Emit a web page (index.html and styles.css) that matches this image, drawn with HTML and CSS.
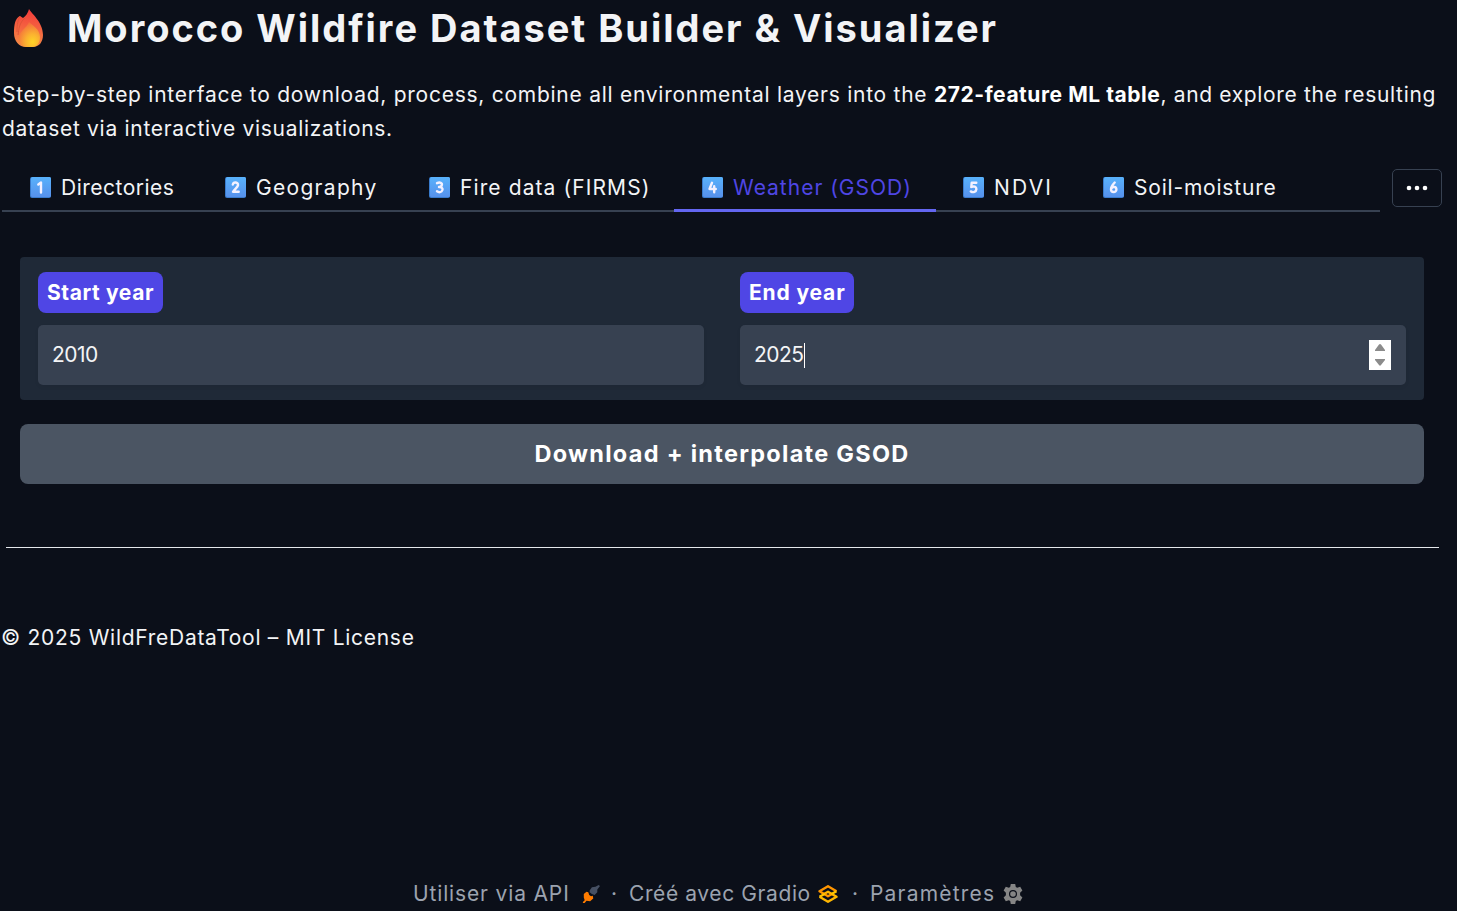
FILE: index.html
```html
<!DOCTYPE html>
<html lang="fr">
<head>
<meta charset="utf-8">
<title>Morocco Wildfire Dataset Builder &amp; Visualizer</title>
<link rel="stylesheet" href="styles.css">
</head>
<body>
<svg class="defs" width="0" height="0" aria-hidden="true">
  <defs>
    <linearGradient id="key" x1="0" y1="0" x2="0" y2="1"><stop offset="0" stop-color="#58b2fc"/><stop offset="1" stop-color="#5791ec"/></linearGradient>
    <linearGradient id="flame" x1=".5" y1="0" x2=".4" y2="1"><stop offset="0" stop-color="#f33b3b"/><stop offset="1" stop-color="#f58b45"/></linearGradient>
    <radialGradient id="core" cx=".65" cy=".8" r=".8"><stop offset="0" stop-color="#ffd426"/><stop offset=".4" stop-color="#fbb230"/><stop offset="1" stop-color="#f36a3d"/></radialGradient>
  </defs>
</svg>
<main class="app">
  <header class="title">
    <svg class="fire" viewBox="0 0 30 38"><path d="M15 0C17 4 29 13 29 26C29 33 25 38 19 38H12C5 38 0 32 0 24C0 16 1 9 6 7L9 9C12 7 14 4 15 0Z" fill="url(#flame)"/><path d="M6 7C3 13 3 18 3 23M11 9C5 14 5 20 4 26" fill="none" stroke="#d95136" stroke-width=".8"/><path d="M15 13C18 16 26 20 26 28C26 34 23 38 18 38H13C8 38 5 34 5 29C5 22 12 20 15 13Z" fill="url(#core)"/></svg>
    <h1>Morocco Wildfire Dataset Builder &amp; Visualizer</h1>
  </header>
  <p class="intro"><span class="line-a">Step-by-step interface to download, process, combine all environmental layers into the </span><strong>272-feature ML table</strong><span class="line-b">, and explore the resulting</span><br><span class="line-c">dataset via interactive visualizations.</span></p>
  <div class="tabs-row">
    <nav class="tabs">
      <button class="tab directories"><svg class="key" viewBox="0 0 21 21"><rect width="21" height="21" rx="2" fill="#397bcc"/><rect x="1" width="20" height="20" rx="1.5" fill="url(#key)"/><path d="M8.3 7.5L11 5.5V15.5"/></svg><span>Directories</span></button>
      <button class="tab geography"><svg class="key" viewBox="0 0 21 21"><rect width="21" height="21" rx="2" fill="#397bcc"/><rect x="1" width="20" height="20" rx="1.5" fill="url(#key)"/><path d="M7.8 7.5C8.5 4.5 13.5 5 13 8.3C12.7 10.5 9.5 12 8 14.8H13.7"/></svg><span>Geography</span></button>
      <button class="tab firms"><svg class="key" viewBox="0 0 21 21"><rect width="21" height="21" rx="2" fill="#397bcc"/><rect x="1" width="20" height="20" rx="1.5" fill="url(#key)"/><path d="M8 6.2C11 4.8 13.5 6 12.8 8.2C12.4 9.5 11.3 10 10 10C14 9.8 14.3 13 12.6 14.4C11.4 15.3 9.4 15.3 8 14.3"/></svg><span>Fire data (FIRMS)</span></button>
      <button class="tab weather active"><svg class="key" viewBox="0 0 21 21"><rect width="21" height="21" rx="2" fill="#397bcc"/><rect x="1" width="20" height="20" rx="1.5" fill="url(#key)"/><path d="M10 5.8L7.5 12H13.8M12.2 9.2V15.3"/></svg><span>Weather (GSOD)</span></button>
      <button class="tab ndvi"><svg class="key" viewBox="0 0 21 21"><rect width="21" height="21" rx="2" fill="#397bcc"/><rect x="1" width="20" height="20" rx="1.5" fill="url(#key)"/><path d="M13.3 5.8H8.7L8.3 10C10.8 8.8 13.5 9.6 13.4 12.2C13.2 15 10.2 15.8 7.8 14.4"/></svg><span>NDVI</span></button>
      <button class="tab soil"><svg class="key" viewBox="0 0 21 21"><rect width="21" height="21" rx="2" fill="#397bcc"/><rect x="1" width="20" height="20" rx="1.5" fill="url(#key)"/><path d="M11.7 5.5C9.8 7.5 8 9.8 8 12.2C8 16 13.4 15.9 13.4 12.4C13.4 9.4 9.2 9.2 8.3 11.8"/></svg><span>Soil-moisture</span></button>
    </nav>
    <button class="more" aria-label="More"><svg width="22" height="6" viewBox="0 0 22 6"><circle cx="3" cy="3" r="2.3"/><circle cx="11" cy="3" r="2.3"/><circle cx="19" cy="3" r="2.3"/></svg></button>
  </div>
  <section class="panel">
    <label class="field"><span class="label"><span class="start">Start year</span></span><span class="entry"><span class="value">2010</span></span></label>
    <label class="field"><span class="label"><span class="end">End year</span></span><span class="entry"><span class="value">2025</span><i class="caret"></i><svg class="spinner" viewBox="0 0 22 30"><rect width="22" height="30" fill="#fff"/><path d="M10 4.5Q11 3.5 12 4.5L16 10V11H6V10ZM6 19H16V20L12 25Q11 26.5 10 25L6 20Z" fill="#8b8b8b"/></svg></span></label>
  </section>
  <button class="download"><span>Download + interpolate GSOD</span></button>
  <hr>
  <p class="copyright">© 2025 WildFreDataTool – MIT License</p>
</main>
<footer class="footer">
  <span class="api">Utiliser via API</span>
  <svg class="rocket" viewBox="0 0 20 20"><path d="M1 19L3 17L2 14V10L5 7.5L7 8L8 11L10 12.5L12 12L12.5 15L9 18L5 17.5L3 20H1Z" fill="#ff7c00"/><path d="M8.5 6L11 2.5L15 2L18.5 0L20 1L17 5V8L14 11L11 10L8.5 8Z" fill="#465063"/></svg>
  <span class="dot">·</span>
  <span class="gradio">Créé avec Gradio</span>
  <svg class="gradio-logo" viewBox="0 0 20 18"><g fill="none" stroke-width="2.4" stroke-linejoin="round"><path d="M1.5 11.8L10 16.8L18.5 11.8L10 6.8L6 9" stroke="#ffb700"/><path d="M18.5 6.2L10 1.2L1.5 6.2L10 11.2L14 9" stroke="#ff9500"/><path d="M1.5 11.8L7 8.8M13 9.2L18.5 6.2" stroke="#ffc400"/></g></svg>
  <span class="dot second">·</span>
  <span class="settings">Paramètres</span>
  <svg class="gear" viewBox="0 0 20 20"><path fill-rule="evenodd" d="M7.8 0H12.2L12.8 3L14.2 3.8L17.2 2.8L19.4 6.6L17.1 8.7V11.3L19.4 13.4L17.2 17.2L14.2 16.2L12.8 17L12.2 20H7.8L7.2 17L5.8 16.2L2.8 17.2L.6 13.4L2.9 11.3V8.7L.6 6.6L2.8 2.8L5.8 3.8L7.2 3ZM10 6A4 4 0 1 0 10 14A4 4 0 1 0 10 6Z" fill="#858585"/><circle cx="10" cy="10" r="2.8" fill="#858585"/></svg>
</footer>
</body>
</html>
```
FILE: styles.css
```css
* { box-sizing: border-box; }
body {
  margin: 0;
  height: 911px;
  overflow: hidden;
  display: flex;
  flex-direction: column;
  background: #0b0f19;
  color: #f3f4f6;
  font: 21px/34px Inter, "Open Sans", sans-serif;
  white-space: nowrap;
}
button { border: 0; background: none; color: inherit; font: inherit; padding: 0; }
.defs { position: absolute; }
.app { flex: 1; padding-left: 2px; }
.title { display: flex; height: 78px; padding: 9px 0 0 12px; }
.fire { width: 30px; height: 38px; margin-right: 23px; flex: none; }
h1 { margin: -6px 0 0; font-size: 38px; line-height: 50px; font-weight: 700; letter-spacing: 1.97px; }
.intro { margin: 0; height: 68px; }
.intro strong { color: #fff; letter-spacing: .55px; }
.line-a { letter-spacing: .74px; }
.line-b { letter-spacing: .66px; }
.line-c { letter-spacing: .7px; }
.tabs-row { display: flex; margin-top: 18px; height: 48px; }
.tabs { display: flex; width: 1378px; height: 48px; border-bottom: 2px solid #374151; }
.tab { display: flex; height: 48px; align-items: center; padding: 2px 0 0 27px; text-align: left; border-bottom: 3px solid transparent; }
.key { width: 21px; height: 21px; margin-right: 10px; flex: none; fill: none; stroke: #f4f1ff; stroke-width: 2.4; stroke-linecap: round; stroke-linejoin: round; }
.key rect { stroke: none; }
.directories { width: 196px; padding-left: 28px; letter-spacing: .5px; }
.geography { width: 203px; letter-spacing: 1.3px; }
.firms { width: 273px; padding-left: 28px; letter-spacing: 1.1px; }
.weather { width: 262px; padding-left: 28px; letter-spacing: 1px; }
.ndvi { width: 140px; letter-spacing: 2.2px; }
.soil { width: 225px; letter-spacing: .8px; }
.tab.active { color: #4f46e5; border-color: #6366f1; }
.more { width: 50px; height: 38px; margin: 5px 0 0 12px; display: flex; align-items: center; justify-content: center; border: 1px solid #374151; border-radius: 5px; fill: #fff; }
.panel { width: 1404px; height: 143px; margin: 45px 0 0 18px; padding: 15px 18px; display: grid; grid-template-columns: 1fr 1fr; gap: 36px; background: #1f2937; border-radius: 4px; }
.label { display: inline-flex; align-items: center; height: 41px; padding: 0 9px; border-radius: 8px; background: #4f46e5; color: #fff; font-weight: 700; vertical-align: top; }
.start { width: 107px; letter-spacing: .6px; }
.end { width: 96px; letter-spacing: .85px; }
.value { letter-spacing: -.5px; }
.entry { display: flex; align-items: center; height: 60px; margin-top: 12px; padding: 0 15px 0 14px; border-radius: 5px; background: #374151; box-shadow: 0 2px 4px #0000000d; }
.caret { width: 1px; height: 25px; background: #fff; }
.spinner { width: 22px; height: 30px; margin-left: auto; }
.download { display: block; width: 1404px; height: 60px; margin: 24px 0 0 18px; border-radius: 8px; background: #4b5563; color: #fff; font-size: 23.5px; font-weight: 700; letter-spacing: 1.28px; }
hr { width: 1433px; height: 1px; margin: 63px 0 0 4px; border: 0; background: #e5e7eb; }
.copyright { margin: 73px 0 0 -1px; letter-spacing: .72px; }
.footer { height: 34px; padding-left: 413px; display: flex; align-items: center; color: #9ca3af; }
.api { width: 169px; letter-spacing: .85px; }
.rocket { width: 18px; height: 18px; margin-right: 11px; }
.dot { width: 18px; }
.gradio { width: 189px; letter-spacing: .6px; }
.gradio-logo { width: 20px; height: 18px; margin-right: 14px; }
.dot.second { width: 18px; }
.settings { width: 133px; letter-spacing: 1.2px; }
.gear { width: 20px; height: 20px; }
```
